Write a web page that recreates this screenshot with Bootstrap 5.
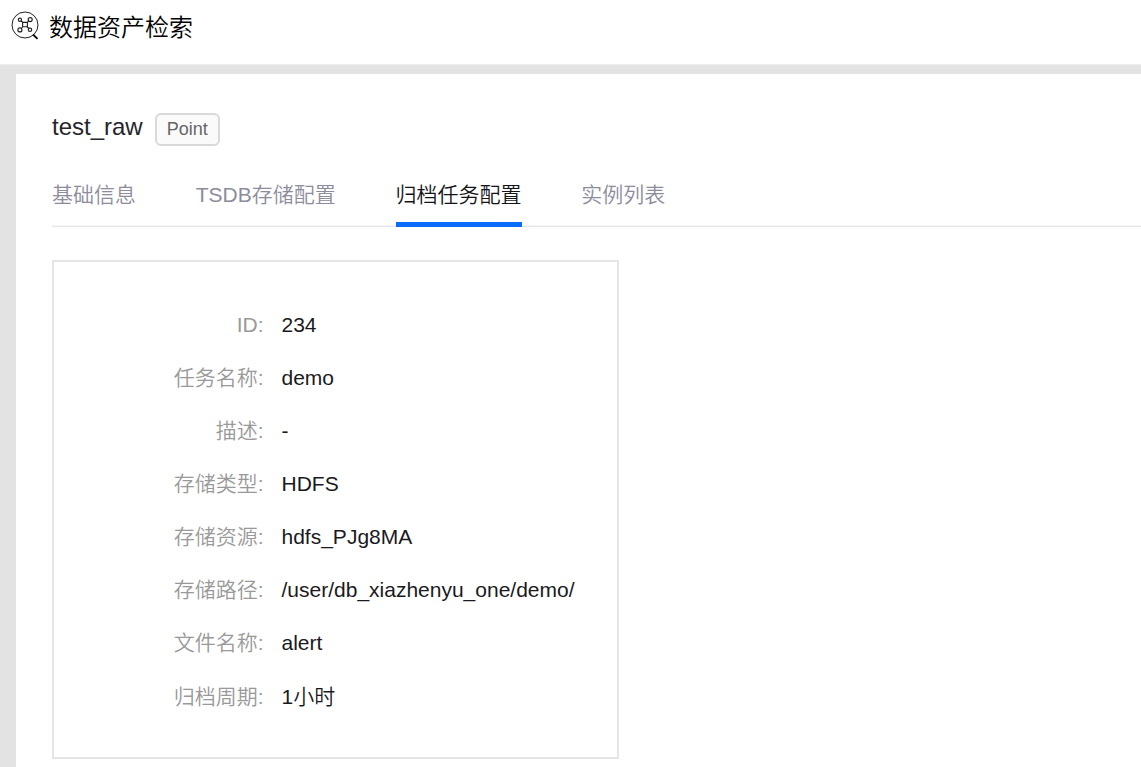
<!DOCTYPE html>
<html lang="zh-CN">
<head>
<meta charset="utf-8">
<meta name="viewport" content="width=device-width, initial-scale=1">
<title>数据资产检索</title>
<link href="https://cdn.jsdelivr.net/npm/bootstrap@5.3.0/dist/css/bootstrap.min.css" rel="stylesheet">
<style>
body{font-family:"Liberation Sans","Noto Sans CJK SC",sans-serif;font-weight:350;background:#e3e3e3;color:#1a1a1e;overflow:hidden}
.app-header{height:65px;border-bottom:1px solid #eee;padding:0 0 9px 11px;gap:10px;color:#000}
.app-header svg{margin-bottom:5px}
.app-title{font-size:24px;line-height:32px;padding-top:1px}
.panel{margin:9px 0 0 16px;height:693px;padding:36px 0 0 36px}
.asset-name{font-size:24px;line-height:34px;color:#25252b}
.type-tag{font-size:18px;line-height:29px;height:33px;width:65px;margin:3px 0 0 12px;border:2px solid #d9d9d9;border-radius:6px;background:#fafafa;color:#666;font-weight:400}
.asset-tabs{margin-top:21px;height:60px;gap:59.75px;box-shadow:inset 0 -1px #e5e6ea,inset 0 -2px #f5f5f7;font-size:21px}
.asset-tabs .nav-link{height:60px;padding:12px 0 0;line-height:32px;color:#8c8c9c;border-bottom:5px solid transparent}
.asset-tabs .nav-link.active{color:#141418;border-color:#0a6cff}
.detail-box{width:567px;height:499px;margin-top:33px;border:2px solid #e5e5e5;padding:36px 0 0;font-size:21px}
.detail-row{height:53.08px;line-height:53px}
.detail-row dt{width:209.5px;margin-right:18px;color:#999;font-weight:350}
</style>
</head>
<body>
<header class="app-header bg-white d-flex align-items-center">
  <svg width="28" height="30" viewBox="0 0 28 30" fill="none" stroke="#222" stroke-width="1.15" aria-hidden="true">
    <circle cx="14" cy="15" r="13" stroke-width="1"/>
    <path d="m22 24.5 4.5 4.3" stroke="#000" stroke-width="1.8"/>
    <rect x="11.6" y="12.3" width="4.8" height="4.4" rx=".7"/>
    <circle cx="8.9" cy="9.7" r="1.6"/><circle cx="19.2" cy="9.6" r="2"/>
    <circle cx="8.9" cy="19.9" r="2"/><circle cx="19" cy="19.8" r="1.7"/>
    <path d="m10 10.8 1.9 1.7m4.2 0 1.7-1.5m-7.5 7.5 1.7-2m3.9 0 1.9 2"/>
  </svg>
  <div class="app-title">数据资产检索</div>
</header>
<main class="panel bg-white">
  <div class="d-flex align-items-start">
    <div class="asset-name">test_raw</div>
    <span class="type-tag text-center">Point</span>
  </div>
  <nav class="nav asset-tabs flex-nowrap">
    <a class="nav-link" href="#">基础信息</a>
    <a class="nav-link" href="#">TSDB存储配置</a>
    <a class="nav-link active" href="#">归档任务配置</a>
    <a class="nav-link" href="#">实例列表</a>
  </nav>
  <dl class="detail-box mb-0">
    <div class="detail-row d-flex"><dt class="text-end">ID:</dt><dd class="mb-0">234</dd></div>
    <div class="detail-row d-flex"><dt class="text-end">任务名称:</dt><dd class="mb-0">demo</dd></div>
    <div class="detail-row d-flex"><dt class="text-end">描述:</dt><dd class="mb-0">-</dd></div>
    <div class="detail-row d-flex"><dt class="text-end">存储类型:</dt><dd class="mb-0">HDFS</dd></div>
    <div class="detail-row d-flex"><dt class="text-end">存储资源:</dt><dd class="mb-0">hdfs_PJg8MA</dd></div>
    <div class="detail-row d-flex"><dt class="text-end">存储路径:</dt><dd class="mb-0">/user/db_xiazhenyu_one/demo/</dd></div>
    <div class="detail-row d-flex"><dt class="text-end">文件名称:</dt><dd class="mb-0">alert</dd></div>
    <div class="detail-row d-flex"><dt class="text-end">归档周期:</dt><dd class="mb-0">1小时</dd></div>
  </dl>
</main>
<script src="https://cdn.jsdelivr.net/npm/bootstrap@5.3.0/dist/js/bootstrap.bundle.min.js"></script>
</body>
</html>
